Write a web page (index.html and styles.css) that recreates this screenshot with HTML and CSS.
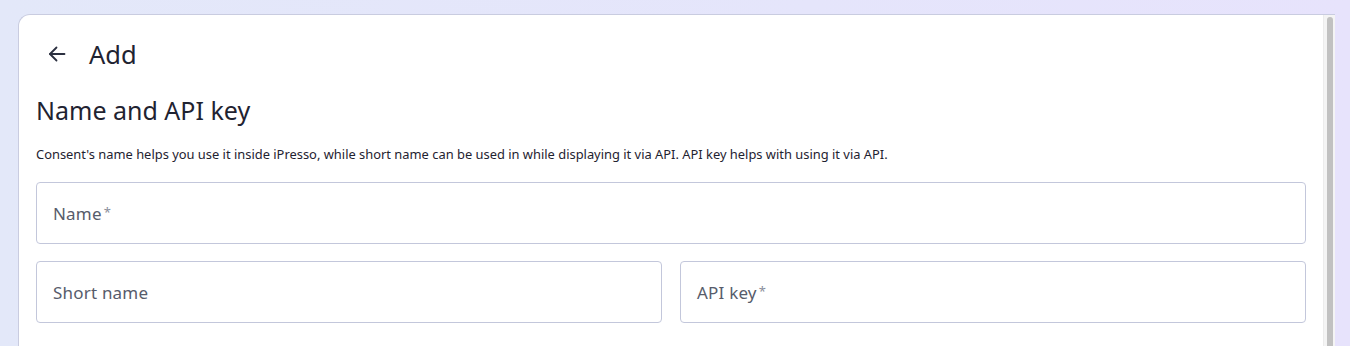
FILE: index.html
```html
<!DOCTYPE html>
<html lang="en">
<head>
    <meta charset="UTF-8">
    <meta name="viewport" content="width=device-width, initial-scale=1.0">
    <title>Add consent</title>
    <link rel="stylesheet" href="styles.css">
</head>
<body>
    <!-- Form card -->
    <div class="card">
        <div class="card-body">
            <div class="topbar">
                <button type="button" class="back" aria-label="Back">
                    <svg viewBox="0 0 24 24" width="24" height="24" fill="none" stroke="currentColor" stroke-width="1.8" stroke-linecap="round" stroke-linejoin="round">
                        <path d="M19.5 12H5"/>
                        <path d="M11.5 5.5L5 12l6.5 6.5"/>
                    </svg>
                </button>
                <h1>Add</h1>
            </div>

            <section class="section">
                <h2>Name and API key</h2>
                <p class="hint">Consent's name helps you use it inside iPresso, while short name can be used in while displaying it via API. API key helps with using it via API.</p>

                <div class="field">
                    <span class="field-label">Name<span class="req">*</span></span>
                </div>

                <div class="row">
                    <div class="field">
                        <span class="field-label">Short name</span>
                    </div>
                    <div class="field">
                        <span class="field-label">API key<span class="req">*</span></span>
                    </div>
                </div>
            </section>
        </div>

        <!-- Scrollbar of the card's scroll area -->
        <div class="scrollbar">
            <div class="scrollbar-thumb"></div>
        </div>
    </div>
</body>
</html>
```

FILE: styles.css
```css
:root {
    --color-text: #1f2331;
    --color-label: #575c6b;
    --color-border: #c3c7db;
    --color-card-border: #c9cce0;
    --font-family: 'Noto Sans', 'Roboto', sans-serif;
}

* {
    box-sizing: border-box;
    margin: 0;
    padding: 0;
}

body {
    height: 100vh;
    overflow: hidden;
    padding: 14px 15px 0 18px;
    background: linear-gradient(90deg, #e3e8f9 0%, #e5e5fb 60%, #e7e3fc 100%);
    font-family: var(--font-family);
    color: var(--color-text);
}

.card {
    display: flex;
    height: 420px;
    background: #fff;
    border: 1px solid var(--color-card-border);
    border-right: none;
    border-radius: 12px 0 0 0;
    overflow: hidden;
}

.card-body {
    flex: 1;
    padding: 18px 17px 40px;
}

.scrollbar {
    width: 12px;
    margin-top: -1px;
    padding: 3px 2px 0 3px;
    background: #f4f4f4;
    border-left: 1px solid #ececec;
}

.scrollbar-thumb {
    height: 100%;
    background: #c1c1c1;
    border-radius: 4px 4px 0 0;
}

/* Header */
.topbar {
    display: flex;
    align-items: center;
    gap: 20px;
    height: 42px;
}

.back {
    display: flex;
    align-items: center;
    justify-content: center;
    width: 24px;
    height: 24px;
    margin-left: 9px;
    border: none;
    background: none;
    color: #2b3040;
    cursor: pointer;
}

.topbar h1 {
    font-size: 25.5px;
    font-weight: 400;
    line-height: 32px;
}

/* Section */
.section {
    display: flex;
    flex-direction: column;
    margin-top: 19px;
}

.section h2 {
    font-size: 25px;
    font-weight: 400;
    line-height: 32px;
}

.hint {
    margin-top: 19px;
    font-size: 12.9px;
    line-height: 18px;
}

.field {
    display: flex;
    align-items: center;
    height: 62px;
    padding: 0 16px;
    border: 1px solid var(--color-border);
    border-radius: 4px;
}

.hint + .field {
    margin-top: 19px;
}

.field-label {
    font-size: 17px;
    color: var(--color-label);
    letter-spacing: 0.2px;
}

.req {
    margin-left: 2px;
    font-size: 13px;
    color: #8a8e9b;
    vertical-align: 3px;
}

.row {
    display: grid;
    grid-template-columns: 1fr 1fr;
    gap: 18px;
    margin-top: 17px;
}
```
